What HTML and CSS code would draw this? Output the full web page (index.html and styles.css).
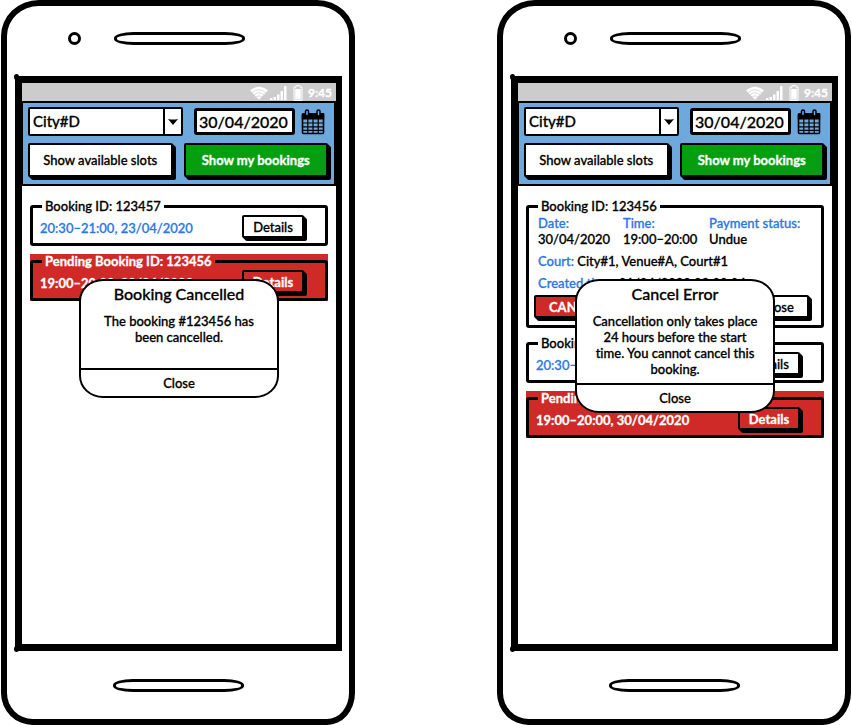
FILE: index.html
```html
<!DOCTYPE html>
<html lang="en">
<head>
<meta charset="utf-8">
<title>Court bookings</title>
<link rel="stylesheet" href="styles.css">
</head>
<body>
<svg class="defs" aria-hidden="true">
  <symbol id="wifi" viewBox="0 0 18 14">
    <path fill="#fff" d="M0 4.500Q9-3 18 4.500L9 13.800Z"/>
    <g fill="none" stroke="#ccc" stroke-width=".7"><path d="M2 6.800Q9 .8 16 6.800"/><path d="M4 8.900Q9 4.600 14 8.900"/><path d="M6 11Q9 8.300 12 11"/></g>
  </symbol>
  <symbol id="signal" viewBox="0 0 17 14">
    <path fill="#fff" d="M0 12h2.500v2H0zM3.500 11H6v3H3.500zM7 8.500h2.500V14H7zM10.500 5H13v9h-2.500zM14 0h2.500v14H14z"/>
  </symbol>
  <symbol id="battery" viewBox="0 0 10 16">
    <path fill="none" stroke="#fff" d="M3 2V.7h4V2h2v13.500H1V2z"/>
    <path fill="#fff" d="M2.200 4h5.600v10.500H2.200z"/>
  </symbol>
  <symbol id="calendar" viewBox="0 0 24 26">
    <rect x="1.500" y="5" width="21" height="19.500" rx="1" fill="none" stroke="#000" stroke-width="1.600"/>
    <path fill="#000" d="M.8 4.500 23.200 4v6.500H.8z"/>
    <path fill="none" stroke="#000" stroke-width="1.200" d="M6.800 10v15M12 10v15M17.200 10v15M1 14h22M1 17.800h22M1 21.300h22"/>
    <g fill="#6fa8dc" stroke="#000" stroke-width="1.500"><rect x="4.500" y="1" width="3" height="6" rx="1.500"/><rect x="16" y="1" width="3" height="6" rx="1.500"/></g>
  </symbol>
</svg>

<main class="board">
  <section class="phone" aria-label="Booking cancelled">
    <div class="bezel-top"><span class="camera"></span><span class="speaker"></span></div>
    <div class="screen">
      <div class="status"><svg width="18" height="14"><use href="#wifi"/></svg><svg width="17" height="14"><use href="#signal"/></svg><svg class="battery" width="10" height="16"><use href="#battery"/></svg><span>9:45</span></div>
      <header class="toolbar">
        <div class="filters">
          <div class="city"><select aria-label="City"><option>City#D</option></select><svg class="arrow" viewBox="0 0 10 6" width="10" height="6"><path d="M0 0Q5 1 10 0L5 6Z"/></svg></div>
          <input class="date" type="text" aria-label="Date" value="30/04/2020">
          <button class="cal" aria-label="Open calendar"><svg width="24" height="26"><use href="#calendar"/></svg></button>
        </div>
        <div class="actions"><button class="btn">Show available slots</button><button class="btn green">Show my bookings</button></div>
      </header>
      <div class="list">
        <div class="card"><fieldset><legend>Booking ID: 123457</legend>
          <div class="summary"><span class="blue">20:30–21:00, 23/04/2020</span><button class="btn small">Details</button></div></fieldset></div>
        <div class="card pending"><fieldset><legend>Pending Booking ID: 123456</legend>
          <div class="summary"><span>19:00–20:00, 30/04/2020</span><button class="btn small">Details</button></div></fieldset></div>
      </div>
      <div class="overlay"><div class="dialog" role="dialog" aria-labelledby="t1"><h2 id="t1">Booking Cancelled</h2><p>The booking #123456 has been cancelled.</p><button class="close">Close</button></div></div>
    </div>
    <div class="bezel-bottom"><span class="speaker"></span></div>
  </section>

  <section class="phone" aria-label="Cancel error">
    <div class="bezel-top"><span class="camera"></span><span class="speaker"></span></div>
    <div class="screen">
      <div class="status"><svg width="18" height="14"><use href="#wifi"/></svg><svg width="17" height="14"><use href="#signal"/></svg><svg class="battery" width="10" height="16"><use href="#battery"/></svg><span>9:45</span></div>
      <header class="toolbar">
        <div class="filters">
          <div class="city"><select aria-label="City"><option>City#D</option></select><svg class="arrow" viewBox="0 0 10 6" width="10" height="6"><path d="M0 0Q5 1 10 0L5 6Z"/></svg></div>
          <input class="date" type="text" aria-label="Date" value="30/04/2020">
          <button class="cal" aria-label="Open calendar"><svg width="24" height="26"><use href="#calendar"/></svg></button>
        </div>
        <div class="actions"><button class="btn">Show available slots</button><button class="btn green">Show my bookings</button></div>
      </header>
      <div class="list">
        <div class="card"><fieldset><legend>Booking ID: 123456</legend>
          <div class="details">
            <dl class="facts">
              <div><dt>Date:</dt><dd>30/04/2020</dd></div>
              <div><dt>Time:</dt><dd>19:00–20:00</dd></div>
              <div><dt>Payment status:</dt><dd>Undue</dd></div>
            </dl>
            <p><span class="blue">Court:</span> City#1, Venue#A, Court#1</p>
            <p><span class="blue">Created time:</span> 01/04/2020 08:00:04</p>
          </div>
          <div class="footer"><button class="btn small red">CANCEL</button><button class="btn small">Close</button></div></fieldset></div>
        <div class="card"><fieldset><legend>Booking ID: 123457</legend>
          <div class="summary"><span class="blue">20:30–21:00, 23/04/2020</span><button class="btn small">Details</button></div></fieldset></div>
        <div class="card pending"><fieldset><legend>Pending Booking ID: 123456</legend>
          <div class="summary"><span>19:00–20:00, 30/04/2020</span><button class="btn small">Details</button></div></fieldset></div>
      </div>
      <div class="overlay"><div class="dialog" role="dialog" aria-labelledby="t2"><h2 id="t2">Cancel Error</h2><p>Cancellation only takes place 24 hours before the start time. You cannot cancel this booking.</p><button class="close">Close</button></div></div>
    </div>
    <div class="bezel-bottom"><span class="speaker"></span></div>
  </section>
</main>
</body>
</html>
```
FILE: styles.css
```css
* { box-sizing: border-box; }
body { margin: 0; background: #fff; color: #000; font: 500 13px/16px Lato, "Open Sans", sans-serif; font-variant-ligatures: none; -webkit-text-stroke: 0.3px; }
button, input, select { font: inherit; color: inherit; margin: 0; -webkit-text-stroke: inherit; }
.defs { position: absolute; width: 0; height: 0; }
.board { display: grid; grid-template-columns: 1fr 1fr; gap: 141px; padding-right: 1px; }
.phone { display: flex; flex-direction: column; min-height: 100vh; margin-left: 1px; padding: 0 7px 0 8px; border: 6px solid #000; border-radius: 38px 38px 28px 32px / 36px 36px 32px 32px; }
.bezel-top { display: flex; align-items: center; gap: 33px; height: 70px; padding: 0 0 6px 53px; }
.bezel-bottom { display: flex; align-items: center; height: 68px; padding-left: 98px; }
.camera { width: 13px; height: 13px; border: 3px solid #000; border-radius: 50%; }
.speaker { width: 131px; height: 13px; border: 3px solid #000; border-radius: 20px / 6px; }
.screen { position: relative; flex: 1; border: 7px solid #000; border-right-width: 6px; }
.screen::before, .screen::after { content: ""; position: absolute; left: -8px; width: 5px; height: 6px; border-radius: 50%; background: #000; }
.screen::before { top: -9px; }
.screen::after { bottom: -8px; }
.status { display: flex; align-items: center; justify-content: flex-end; gap: 2px; height: 18px; padding: 2px 4px 0 0; background: #ccc; color: #fff; font-size: 12px; font-weight: 700; }
.status .battery { margin: 0 3px 0 4px; }
.toolbar { border: 2px solid #000; border-left-width: 1px; background: #6fa8dc; padding: 4px 3px 4px 5px; }
.filters { display: flex; align-items: center; }
.city { position: relative; flex: 1; display: flex; margin-right: 11px; }
.city select { width: 100%; height: 29px; padding: 0 24px 1px 3px; border: 2px solid #000; border-radius: 2px; background: linear-gradient(90deg, #000 2px, #fff 2px) right / 18px no-repeat #fff; font-size: 15px; appearance: none; }
.arrow { position: absolute; right: 5px; top: 12px; pointer-events: none; }
.date { width: 101px; height: 27px; padding: 0 2px; border: 3px solid #000; border-radius: 3px; background: #fff; font-size: 16px; }
.cal { display: flex; margin: 0 6px; padding: 0; border: 0; background: none; }
.actions { display: grid; grid-template-columns: 1fr 1fr; gap: 8px; margin-top: 7px; }
.btn { height: 34px; margin: 0 3px 3px 0; padding: 0 6px; border: 2px solid #000; border-radius: 2px; background: #fff; box-shadow: 1px 1px #000, 2px 2px #000, 3px 3px #000; }
.green { background: #049e10; color: #fff; font-weight: 700; }
.small { min-width: 62px; height: 23px; }
.red { padding: 0 13px; background: #cf2a27; color: #fff; font-weight: 700; }
.list { display: grid; gap: 8px; padding: 13px 8px; }
.card { min-width: 0; }
fieldset { min-width: 0; margin: 0; padding: 0; border: 3px solid #000; border-radius: 3px; }
legend { height: 14px; margin-left: 9px; padding: 0 3px; line-height: 14px; }
.pending { background: #cf2a27; color: #fff; font-weight: 700; }
.pending legend { background: #cf2a27; }
.pending .btn { background: #cf2a27; font-weight: 700; }
.summary { display: flex; justify-content: space-between; align-items: center; height: 30px; padding: 0 18px 0 7px; }
.blue, dt { color: #2b78e4; }
.details { padding: 2px 9px 0; }
.facts { display: grid; grid-template-columns: 85px 86px auto; margin: 0; }
dd { margin: 0; }
.details p { margin: 6px 0 0; white-space: nowrap; }
.footer { display: flex; justify-content: space-between; padding: 4px 9px 4px 5px; }
.overlay { position: absolute; inset: 196px 57px auto; }
.dialog { border: 2px solid #000; border-radius: 24px / 22px; background: #fff; text-align: center; overflow: hidden; }
h2 { margin: 4px 0 10px; font: inherit; font-size: 16px; line-height: 18px; }
.dialog p { min-height: 55px; margin: 0; padding: 0 14px 6px; }
.close { display: block; width: 100%; height: 28px; border: 0; border-top: 2px solid #000; background: none; }
```
